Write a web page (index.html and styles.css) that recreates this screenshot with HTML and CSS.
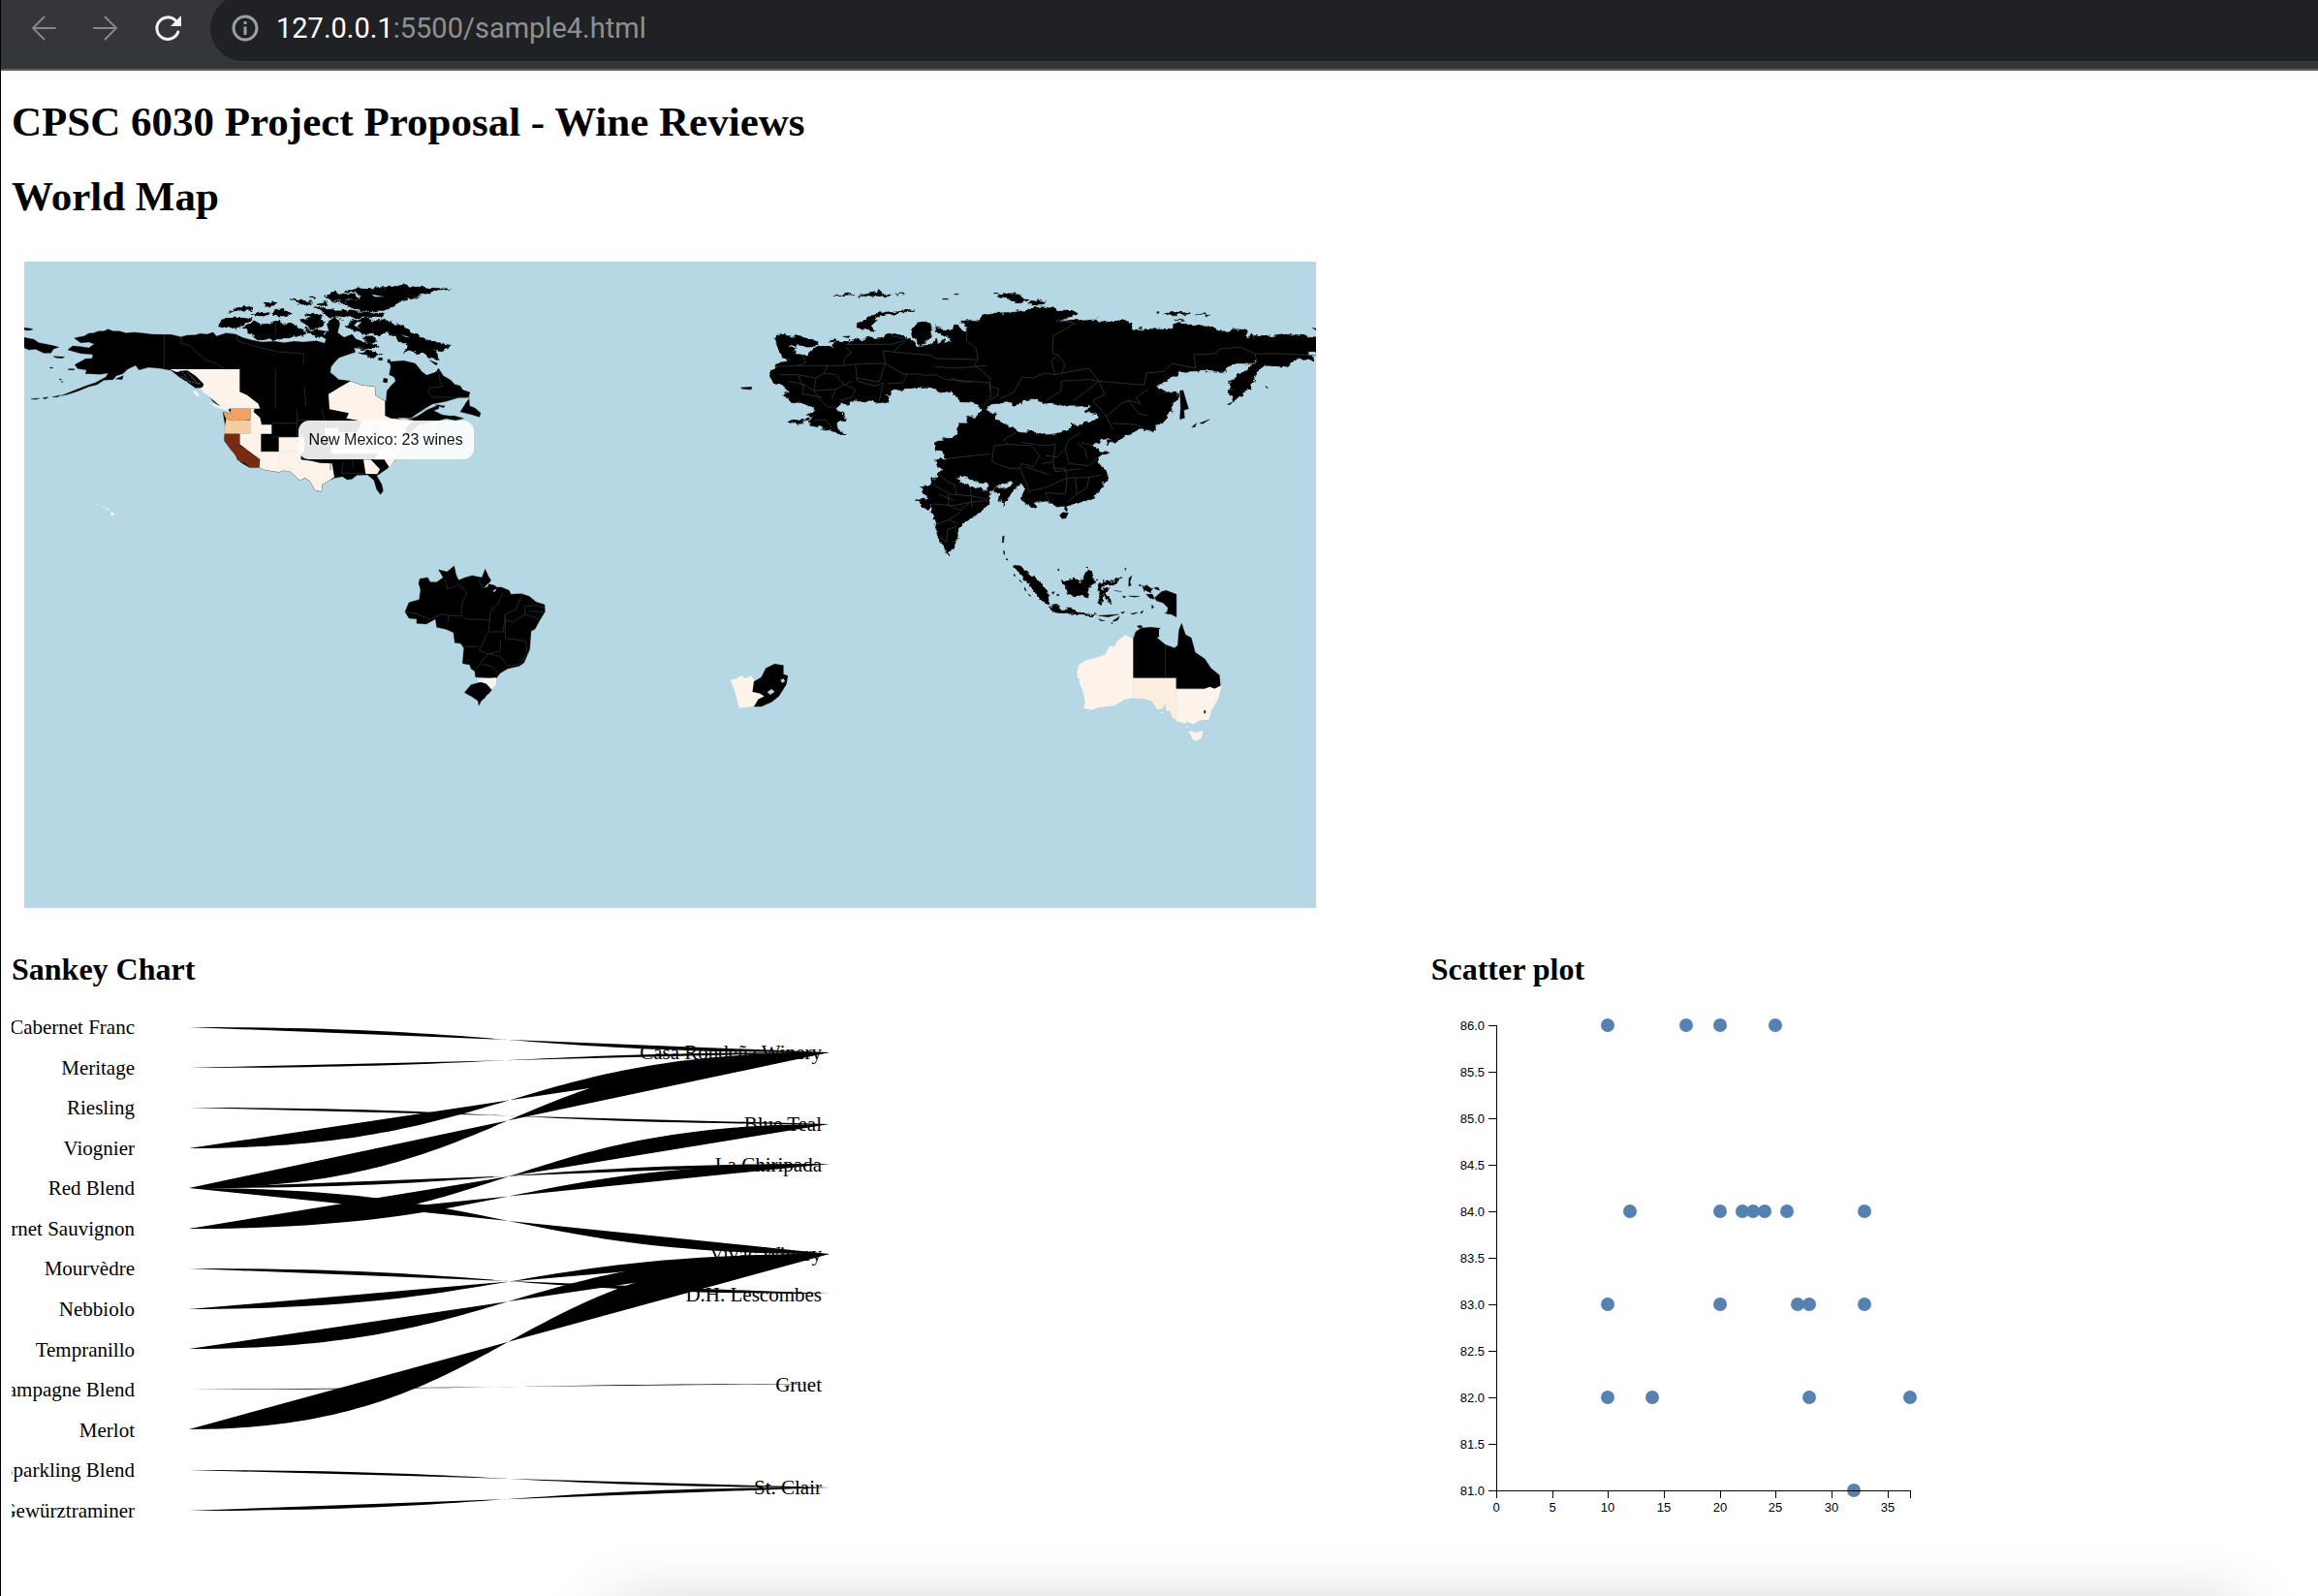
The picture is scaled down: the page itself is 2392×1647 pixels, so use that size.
FILE: index.html
```html
<!DOCTYPE html>
<html lang="en">
<head>
<meta charset="utf-8">
<title>CPSC 6030 Project Proposal - Wine Reviews</title>
<meta name="viewport" content="width=device-width, initial-scale=1">
<link rel="stylesheet" href="styles.css">
</head>
<body>
<div class="window">
  <header class="toolbar">
    <nav class="toolbar-nav" aria-label="Browser">
      <button class="nav-button dim" type="button" aria-label="Back">
        <svg viewBox="0 0 26 26"><path d="M25 13H2M13.500 1.500L2 13l11.500 11.500"/></svg>
      </button>
      <button class="nav-button dim" type="button" aria-label="Forward">
        <svg viewBox="0 0 26 26"><path d="M1 13h23M12.500 1.500L24 13 12.500 24.500"/></svg>
      </button>
      <button class="nav-button" type="button" aria-label="Reload">
        <svg viewBox="0 0 26 26"><path d="M23.800 17A11.300 11.300 0 1 1 21 5" stroke-width="3"/><path d="M27 0v11H16z" fill="currentColor" stroke="none"/></svg>
      </button>
    </nav>
    <div class="omnibox">
      <svg class="info" viewBox="0 0 28 28"><circle cx="14" cy="14" r="12"/><path d="M14 12.500V21M14 7v3"/></svg>
      <span class="url"><span class="host">127.0.0.1</span>:5500/sample4.html</span>
    </div>
  </header>

  <main class="page">
    <h1>CPSC 6030 Project Proposal - Wine Reviews</h1>
    <h1>World Map</h1>

    <figure class="map">
      <svg class="map-svg" viewBox="0 0 1333 667" role="img" aria-label="World map of wines by region">
        <defs>
          <filter id="coast" x="-5%" y="-5%" width="110%" height="110%">
            <feTurbulence type="fractalNoise" baseFrequency=".05" numOctaves="3" seed="4"/>
            <feDisplacementMap in="SourceGraphic" scale="22" xChannelSelector="R" yChannelSelector="G"/>
          </filter>
        </defs>
        <rect class="sea" width="1333" height="667"/>

        <!-- North America -->
        <g transform="translate(-5 -5) scale(.33333)">
          <path class="land" d="M170 252L185 248 200 246 215 237 230 236 245 230 262 230 275 224 290 230 310 230 330 236 355 234 380 236 410 240 448 241 470 241 500 248 520 243 545 242 560 238 580 240 600 234 610 246 640 236 670 240 690 250 720 258 750 264 790 262 820 266 850 262 880 264 920 260 945 268 950 255 938 248 958 228 952 208 975 193 992 208 985 235 1005 250 1030 240 1042 255 1062 262 1055 275 1035 280 1040 295 1010 305 990 312 980 322 965 340 962 358 975 368 988 380 1025 385 1060 398 1100 402 1103 430 1120 440 1135 448 1138 415 1150 400 1165 385 1160 372 1145 365 1150 340 1145 325 1190 322 1225 330 1242 350 1260 365 1285 358 1298 346 1312 368 1335 382 1348 395 1365 400 1372 412 1395 420 1390 435 1360 436 1320 448 1280 455 1258 468 1225 490 1205 505 1235 492 1262 474 1300 458 1298 470 1282 476 1310 490 1345 494 1300 506 1260 515 1235 520 1205 550 1165 628 1140 655 1115 672 1106 678 1122 705 1126 725 1118 736 1106 720 1098 692 1078 675 1045 676 1030 688 1015 690 1000 680 975 685 960 692 938 704 935 727 915 722 900 695 885 684 868 692 850 675 835 663 813 662 805 667 760 660 742 652 712 652 685 636 655 595 635 570 637 520 630 480 650 486 650 470 620 462 595 445 570 405 545 406 520 388 495 372 470 352 440 346 400 342 370 350 360 336 335 348 320 362 300 368 290 380 262 382 240 396 215 402 180 416 150 426 130 430 175 412 210 398 235 390 268 372 275 360 250 364 222 362 205 362 208 350 180 346 172 334 190 324 205 316 225 315 228 302 190 299 150 288 165 276 190 278 215 282 232 270 215 264 190 266Z"/>
          <path class="land" d="M15 220L35 222 42 225 28 228 15 226ZM15 250L45 256 60 266 80 270 100 274 122 280 105 286 98 298 75 298 50 286 30 288 15 282ZM105 308L140 310 132 314 112 312ZM95 343h8v2h-8ZM124 379h6v2h-6ZM130 386h4v2h-4ZM152 347h18v3h-18ZM298 378L322 368 318 380ZM36 440L62 438 50 442ZM72 437L90 434 80 440ZM102 434L128 428 118 434Z"/>
          <!-- Arctic archipelago -->
          <g filter="url(#coast)">
            <path class="land" d="M618 212L632 188 665 188 690 186 725 192 700 208 680 218 650 222ZM652 168L675 160 690 154 722 156 720 166 695 166 668 172ZM716 178L745 170 780 174 765 184 735 182ZM690 218L725 204 750 206 795 202 805 190 818 206 850 208 860 218 888 232 880 248 845 246 812 256 780 254 745 258 728 252 720 238ZM756 142L798 140 785 154 758 154ZM785 172L806 160 845 174 825 184 785 182ZM843 132L872 132 908 142 880 150ZM900 124L915 122 918 130 905 131ZM868 194L895 190 925 188 948 206 928 220 902 222 880 210ZM882 222L935 228 955 242 912 246ZM882 180L915 174 940 184 912 192ZM910 152L960 164 1000 164 1040 170 1080 170 1134 176 1128 188 1060 188 1010 190 958 184 940 170ZM920 144L945 140 960 152 935 152Z"/>
            <path class="land" d="M943 124L975 110 1005 114 1040 118 1050 128 1000 136 970 134 955 130ZM1000 108L1045 99 1090 96 1160 92 1220 92 1335 100 1290 108 1240 118 1210 130 1170 142 1145 158 1135 166 1095 168 1060 166 1025 160 1015 144 985 144 975 138 1030 134 1060 126 1040 112Z"/>
            <path class="land" d="M1014 218L1022 202 1050 192 1080 192 1105 200 1135 196 1160 206 1190 218 1215 232 1240 246 1262 260 1290 264 1332 274 1318 292 1285 288 1300 320 1272 314 1250 302 1215 292 1188 294 1206 276 1175 264 1160 242 1138 234 1110 246 1090 238 1065 240 1035 234ZM1030 282L1055 266 1085 262 1114 278 1085 286ZM1052 300L1080 290 1122 302 1095 308ZM1065 248L1095 248 1105 262 1080 264ZM955 200L975 188 998 200 975 208Z"/>
          </g>
          <path class="water" d="M1060 202L1046 215 1058 224 1036 212 1046 202ZM1090 116L1130 124 1100 124ZM1240 335L1265 340 1290 338 1292 355 1262 366 1245 355ZM810 258L850 250 840 258ZM1180 240L1210 250 1196 248Z"/>
          <path class="land" d="M1365 480L1378 460 1385 448 1392 440 1394 462 1410 468 1428 484 1424 496 1405 490 1390 486ZM1320 500L1345 492 1375 500 1350 506ZM1288 458L1318 462 1312 467ZM1112 313h12v7h-12ZM1140 318h8v10h-8ZM1128 376L1140 378 1138 390 1126 388ZM1270 320L1295 330 1290 336Z"/>
          <path class="cream" d="M465 348H682V418L705 428 740 455 745 470H650L640 476 605 464 590 452 622 462 590 436 570 420 560 405 570 398 545 368 520 354 495 356 485 356ZM536 414L550 416 558 434 545 428Z"/>
          <path class="land" d="M495 354L520 352 548 372 570 394 566 404 545 402 520 386 502 372Z"/>
          <path class="frost" d="M503 356L518 372M520 358L548 386M502 370L530 386M530 370L560 400M515 385L560 392"/>
          <path class="cream" d="M715 471H728L725 480 745 498 750 520 781 520V548H748V604H803V558H882V603L872 608V628L905 632 930 638 968 640 975 682 960 692 938 704 935 727 915 722 900 695 885 684 868 692 850 675 835 663 813 662 805 667 760 660 742 652 745 628 682 580V548H715Z"/>
          <path class="cream" d="M1025 385L1060 398 1100 402 1103 430 1120 440 1132 447V492L1150 500 1222 506 1195 530 1200 560 1165 628 1145 652 1130 628H1098L1110 610H965L963 560 945 555V530H985L990 543H1045L1060 512 1050 507 1012 500 1020 484 960 472 957 425 990 405ZM1065 628H1088L1116 658 1108 673 1072 672Z"/>
          <path class="water" d="M1170 498L1215 500 1190 506ZM575 420L600 448 585 440ZM640 470L656 484 648 486Z"/>
          <path class="wa" d="M630 480L652 487 655 471H715V505H690L665 508 640 503Z"/>
          <path class="or" d="M640 503L665 508 690 505 720 506 715 520V548H634L637 520Z"/>
          <path class="ca" d="M635 548H682V582L745 628 742 652H712L700 640 675 630 668 612 652 595 635 570Z"/>
          <path class="cream" d="M239 768L246 769 243 772ZM258 774h5v3h-5ZM268 779h10v4h-10ZM283 790L293 794 290 803 282 798Z"/>
          <path class="border" d="M448 241V345M500 248V268L530 276 550 298 580 320 610 332 638 348M672 240L675 260 740 280 800 294 880 300V330M793 205V238M793 348V470M882 402L887 460M860 471V558M860 506H950L948 530M935 470L945 505M781 515H860M781 558H860M963 640V660M1002 632L998 670M1032 628V656M998 670H1068M1298 348L1300 375 1310 400 1290 405 1270 405 1265 420 1280 435H1395"/>
          <path class="border-light" d="M715 505V548H748M682 548H715M748 604H872M803 604V662M812 658H870"/>
        </g>

        <!-- Brazil -->
        <g transform="translate(355 290) scale(.33333)">
          <path class="land" d="M114 214L126 185 158 176 162 146 156 125 160 112 184 108 192 122 212 122 232 108 218 84 244 90 266 72 272 100 280 116 300 108 322 102 340 106 352 108 362 82 372 104 380 116 372 128 390 132 398 138 412 138 436 148 442 160 474 158 498 166 520 184 546 192 547 214 530 242 516 268 504 274 500 330 482 372 468 382 432 390 408 404 396 420 332 416 330 398 318 390 314 378 292 374 296 326 286 312 268 310 264 278 240 268 212 262 208 236 180 252 150 250 150 236 126 234Z"/>
          <path class="cream" d="M338 422L396 418V440L382 454 364 436 342 432Z"/>
          <path class="land" d="M298 464L318 440 348 432 366 438 382 456 368 474 350 490 342 504 340 490 320 476Z"/>
          <path class="water" d="M358 140L374 124 370 136ZM384 150L398 142 392 152ZM362 478L374 466 370 478Z"/>
          <path class="border" d="M118 214L150 220 192 238 230 220 248 226H290L300 236 376 240 378 214 402 188 418 154M248 226V246M238 112L246 144 280 130 306 156 290 190 288 222M340 112L356 142M376 240L372 276H418L424 222 458 206 476 160M424 240L448 246 486 222 484 198 512 194 546 200M424 222V296L488 304 492 340 470 376 430 382 410 352 370 344 344 334 370 278M410 304L408 336 370 344 332 392M300 322H344M352 376L384 384 402 404M486 222L518 232 530 240M500 212L544 214"/>
        </g>

        <!-- South Africa -->
        <g transform="translate(-25 -270) scale(1.5255)">
          <path class="cream" d="M494 460L498 459 502 457 504 459 508 457 511 461 511 468 517 471 513 476 508 478 500 479 498 471 496 465Z"/>
          <path class="south-land" d="M510 461L515 458 518 452 524 449 530 450 530 456 533 457 532 463 527 471 522 475 515 478 510 478 513 473 517 471 514 469 509 468Z"/>
          <path class="water" d="M519 468l3-2 2 2-3 2ZM528 460l2-1 1 2-2 1Z"/>
        </g>

        <!-- Russia, China and India -->
        <g transform="translate(715 0) scale(.40816 .33333)">
          <g filter="url(#coast)">
            <path class="land" fill-rule="evenodd" d="M142 236L148 229 175 225 205 232 230 238 252 246 256 256 245 265 215 264 188 258 178 264 200 268 196 280 215 282 228 290 242 272 262 262 288 264 300 250 282 244 300 238 300 248 320 250 345 240 370 240 380 234 400 240 422 236 430 226 450 226 480 235 495 250 512 262 530 262 545 250 555 240 558 256 572 240 590 250 594 236 570 230 552 215 550 195 562 206 590 212 600 192 622 205 634 212 638 200 612 190 615 184 645 180 665 182 668 168 700 160 750 156 790 150 798 142 830 140 865 150 905 150 912 160 890 175 845 188 900 180 920 182 960 180 990 190 1010 182 1045 185 1052 205 1080 212 1085 205 1145 208 1150 195 1200 192 1230 198 1265 212 1325 212 1340 218 1345 238 1350 226 1400 228 1430 224 1540 236V276L1490 280 1508 296 1506 306 1470 302 1430 328 1380 325 1362 345 1365 352 1356 360 1362 370 1350 378 1350 392 1330 402 1318 420 1305 432 1297 400 1295 375 1320 350 1345 328 1370 310 1370 304 1352 322 1330 315 1310 315 1285 330 1288 342 1240 338 1180 340 1140 365 1108 388 1130 395 1132 404 1160 402 1164 420 1152 450 1140 475 1112 512 1100 522 1072 520 1030 540 1010 552 985 568 990 548 972 552 950 570 968 584 990 585 965 610 965 620 985 655 988 675 965 712 935 742 912 746 885 756 860 760 840 745 805 745 802 762 785 755 770 730 775 705 770 688 748 708 735 735 724 752 718 735 710 742 714 712 695 710 700 704 730 700 750 688 735 678 712 700 688 708 690 735 688 755 668 765 662 778 640 795 610 825 607 870 595 895 585 908 575 895 560 850 548 810 542 755 530 768 515 760 520 748 502 738 535 732 520 715 515 695 540 685 560 655 570 640 555 635 553 615 580 610 568 590 556 585 550 560 560 550 590 545 610 535 612 500 630 500 632 482 660 475 675 458 660 448 640 435 620 435 600 410 580 402 555 402 540 390 525 385 480 395 440 400 436 412 428 418 437 432 410 437 380 432 350 430 325 440 308 440 305 458 318 470 322 490 305 505 308 518 320 535 312 540 290 524 262 516 240 508 225 496 190 502 178 493 198 488 225 495 240 480 228 475 245 465 245 450 215 440 185 430 168 412 182 405 165 388 158 376 135 370 133 335 150 325 142 320 165 308 185 305 160 290 155 268 150 252ZM678 456L692 466 706 474 706 492 735 505 755 525 800 528 830 536 862 532 890 520 895 502 920 505 968 484 962 470 932 466 940 446 915 448 870 448 840 438 805 428 775 425 770 445 740 435 700 440 690 450ZM610 672L625 663 650 680 685 688 685 706 650 698 618 684Z"/>
            <path class="land" d="M490 210L510 188 530 186 542 198 540 235 520 260 500 238ZM348 203L362 188 385 168 420 158 470 150 505 146 500 152 455 158 415 170 390 185 385 200 402 214 375 212ZM290 103L330 102 348 100 335 106 310 107ZM360 106L385 98 412 92 418 100 445 104 420 108 400 106 385 108ZM455 99L475 98 470 103ZM710 110L725 98 755 98 768 108 788 118 775 125 745 120ZM785 132L805 118 838 126 820 132ZM1125 160L1150 154 1195 160 1160 168 1140 166ZM1208 163L1248 166 1225 168ZM1155 180L1185 182 1170 186Z"/>
          </g>
          <path class="land" d="M1112 155h5v5h-5ZM1505 205L1514 207V212ZM1170 400L1178 398 1188 440 1192 455 1180 460 1182 484 1170 488 1172 450ZM60 390L88 388 86 396 64 394ZM318 232L336 230 332 236ZM1200 512L1212 500 1208 512ZM1220 500L1245 488 1228 502ZM1290 442L1304 434 1296 443ZM1387 385l6 6h-4ZM866 785L874 776 888 778 882 794 872 796ZM722 850l4 0-2 20h-3ZM724 895l2 0 1 12h-2ZM730 920h4l1 4h-3ZM880 756l6 10-2 8-6-8ZM570 115h14v2h-14ZM600 100h10v2h-10ZM700 97h10v2h-10Z"/>
          <path class="border" d="M150 325L205 322 320 322 340 318 425 315 470 348 512 348 525 352 555 350 575 365 640 370 688 375 690 400M205 322L225 312 215 290M320 322L322 300 340 280 325 265M325 256H440L470 245M425 315L420 275 445 280 480 240 440 230M445 280L540 290 555 300 660 303 655 270 630 245 632 215M480 348L470 375 430 378M550 325L600 330 680 322M660 303L650 320 690 360 692 420 670 450M590 360L620 372 645 372M692 385L712 395 708 415 690 430M860 180L905 190 850 230 848 285 862 288 880 320 870 345 855 350 828 345 800 360 770 358 750 405 715 425M862 288L845 310 855 350M870 345L940 330 965 370 940 365 870 370 870 400 830 430M965 370L935 400 900 430M965 370L1080 382 1085 345 1130 340 1150 315 1210 330 1205 288 1260 285 1270 270 1325 265 1360 285 1420 285 1514 290M1360 285L1365 315M965 370L980 410 950 430 985 480 1000 520M985 480L1020 440 1040 430 1070 440 1060 420 1090 395M1040 430L1065 470 1090 478M1000 500L1060 505 1075 515M205 350L250 360 270 345 300 350 320 380 350 395 340 420 310 430M220 380L245 400 300 395 340 370M180 370L220 380 215 410 265 420M250 360L245 400 265 435M160 350L205 350 215 385M265 435L280 450 300 450M245 490L275 490 290 515M350 320L355 370 400 385 420 375 410 430M270 345L280 320M300 395L290 425M350 360L410 372 425 315M580 610L690 595M700 570L695 620 740 640 765 640 770 625 800 635 815 600 795 570 735 565 700 570ZM735 565L725 550 755 530M770 560L830 570 855 565 850 620 820 625M830 600L860 605 880 580 890 550 920 530M880 580L890 625 940 632 960 610M850 640L880 640 885 670 830 700 790 710M765 640L780 680 790 715M885 670L940 668 970 660M885 670L880 720 830 715 840 745M905 670L910 720 885 745M940 668L935 700 910 720M850 620L855 650 920 642M910 560L930 580 935 610M920 560L950 570M780 635L840 660M545 690L590 720 640 725 685 735M560 655L580 680 600 690 605 720M545 750L600 755 640 745 685 740M585 720V755L615 770 640 745M548 815L585 800 610 810M585 800L615 775M560 850L580 870 582 830 605 820M640 700L645 760M600 740L560 720"/>
        </g>

        <!-- Indonesia and Australia -->
        <g transform="translate(895 130) scale(.33333)">
          <path class="land" filter="url(#coast)" d="M372 548L400 552 430 580 455 598 470 615 478 632 492 635 488 645 492 672 475 668 450 645 425 612 410 588 385 562ZM486 678L510 676 530 684 555 684 585 696 610 702 635 704 620 708 580 704 545 698 500 692ZM526 592L540 600 560 594 588 600 598 570 606 562 622 565 624 590 634 600 618 608 608 652 590 648 545 642 540 622 528 610ZM645 602L690 598 706 592 695 608 655 610 654 622 675 620 664 634 684 668 664 655 655 640 652 672 640 668 645 635 638 625ZM775 620L795 614 806 622 802 634 782 630Z"/>
          <path class="land" d="M640 706L668 704 704 702 670 710ZM640 716L660 722 648 722ZM685 722L706 708 700 720 688 724ZM815 650L835 632 850 628 882 640V710L862 700 852 698 856 682 840 666 820 660ZM714 645L726 647 720 651ZM734 645L768 646 752 649ZM735 590L744 582 738 602 742 612 734 615ZM788 640L808 640 814 655 800 652ZM806 672L812 680 806 684ZM770 696L780 690 774 700ZM846 698L860 694 862 702ZM396 594L404 604 398 600ZM412 618L418 630 412 626ZM378 576L384 582 380 584ZM424 638L432 646 426 644ZM710 696L722 694 716 700ZM740 700L762 696 750 702ZM765 610L775 612 768 615ZM690 628L712 632 700 630ZM496 633L505 632 500 640ZM512 640h6v4h-6ZM515 562h4v4h-4ZM722 560l4-2-2 8ZM680 728h5v2h-5ZM760 738L772 736 778 742 766 744ZM812 620L825 618 830 628 818 624Z"/>
          <path class="cream" d="M574 880L580 858 600 845 660 828 675 800 690 802 698 785 725 765 740 775 749 776V960L720 966 690 985 640 990 620 998 594 992 600 975 592 940 580 910 584 905 576 898Z"/>
          <path class="south-au" d="M749 898H882V1030L868 1020 862 1000 850 1002 848 978 838 995 822 996 805 970 775 962 749 962Z"/>
          <path class="land" d="M749 898V776L756 756 772 745 800 742 832 745 830 768 822 775 848 796 876 806 886 798 890 750 898 730 910 765 928 775 940 820 970 840 988 868 1015 890 1018 922 1000 932H882V898Z"/>
          <path class="cream" d="M882 932H970L985 926 1000 932 1021 924 1012 962 990 1000 982 1028 955 1030 935 1042 915 1034 908 1040 882 1032ZM920 1062L942 1068 964 1062 960 1085 942 1094 932 1088ZM912 1050h6v4h-6ZM832 1005L845 1004 838 1009Z"/>
          <path class="land" d="M968 1000h4v8h-4Z"/>
          <path class="water" d="M828 748L836 744 838 772 828 768Z"/>
          <path class="border" d="M749 776V898M848 796V898M749 898H882V932H970"/>
          <path class="border-light" d="M749 898V960M882 932V1030M882 988L905 995 930 1008 965 1010 982 1025"/>
        </g>
      </svg>
      <figcaption class="tooltip" role="tooltip">New Mexico: 23 wines</figcaption>
    </figure>

    <div class="charts">
      <section>
        <h2>Sankey Chart</h2>
        <svg class="sankey" viewBox="0 0 860 530" role="img" aria-label="Sankey chart of grape varieties and wineries">
          <g class="labels">
            <text x="127" y="21">Cabernet Franc</text>
            <text x="127" y="63">Meritage</text>
            <text x="127" y="104">Riesling</text>
            <text x="127" y="146">Viognier</text>
            <text x="127" y="187">Red Blend</text>
            <text x="127" y="229">Cabernet Sauvignon</text>
            <text x="127" y="270">Mourvèdre</text>
            <text x="127" y="312">Nebbiolo</text>
            <text x="127" y="354">Tempranillo</text>
            <text x="127" y="395">Champagne Blend</text>
            <text x="127" y="437">Merlot</text>
            <text x="127" y="478">Sparkling Blend</text>
            <text x="127" y="520">Gewürztraminer</text>
            <text x="836" y="47">Casa Rondeña Winery</text>
            <text x="836" y="121">Blue Teal</text>
            <text x="836" y="163">La Chiripada</text>
            <text x="836" y="255">Vivac Winery</text>
            <text x="836" y="297">D.H. Lescombes</text>
            <text x="836" y="390">Gruet</text>
            <text x="836" y="496">St. Clair</text>
          </g>
          <g class="links">
            <path d="M183 14C513 14 513 40 844 40"/>
            <path d="M183 56C513 56 513 40 844 40"/>
            <path d="M183 97C513 97 513 114 844 114"/>
            <path d="M183 139C513 139 513 40 844 40"/>
            <path d="M183 180C513 180 513 40 844 40"/>
            <path d="M183 180C513 180 513 155 844 155"/>
            <path d="M183 180C513 180 513 248 844 248"/>
            <path d="M183 222C513 222 513 114 844 114"/>
            <path d="M183 222C513 222 513 155 844 155"/>
            <path d="M183 263C513 263 513 289 844 289"/>
            <path d="M183 305C513 305 513 248 844 248"/>
            <path d="M183 346C513 346 513 248 844 248"/>
            <path d="M183 388C513 388 513 382 844 382"/>
            <path d="M183 429C513 429 513 248 844 248"/>
            <path d="M183 471C513 471 513 489 844 489"/>
            <path d="M183 513C513 513 513 489 844 489"/>
          </g>
        </svg>
      </section>

      <section>
        <h2>Scatter plot</h2>
        <svg class="scatter" viewBox="0 0 520 530" role="img" aria-label="Scatter plot of points against price">
          <g class="dots">
            <circle cx="182" cy="12" r="7"/><circle cx="263" cy="12" r="7"/><circle cx="298" cy="12" r="7"/><circle cx="355" cy="12" r="7"/>
            <circle cx="205" cy="204" r="7"/><circle cx="298" cy="204" r="7"/><circle cx="321" cy="204" r="7"/><circle cx="332" cy="204" r="7"/><circle cx="344" cy="204" r="7"/><circle cx="367" cy="204" r="7"/><circle cx="447" cy="204" r="7"/>
            <circle cx="182" cy="300" r="7"/><circle cx="298" cy="300" r="7"/><circle cx="378" cy="300" r="7"/><circle cx="390" cy="300" r="7"/><circle cx="447" cy="300" r="7"/>
            <circle cx="182" cy="396" r="7"/><circle cx="228" cy="396" r="7"/><circle cx="390" cy="396" r="7"/><circle cx="494" cy="396" r="7"/>
            <circle cx="436" cy="492" r="7"/>
          </g>
          <path class="axis" d="M59 12H67V492H59M59 60h8M59 108h8M59 156h8M59 204h8M59 252h8M59 300h8M59 348h8M59 396h8M59 444h8"/>
          <path class="axis" d="M67 500V492H494V500M125 492v8M182 492v8M240 492v8M298 492v8M355 492v8M413 492v8M471 492v8"/>
          <g class="ticks-y">
            <text x="55" y="17">86.0</text><text x="55" y="65">85.5</text><text x="55" y="113">85.0</text><text x="55" y="161">84.5</text><text x="55" y="209">84.0</text><text x="55" y="257">83.5</text><text x="55" y="305">83.0</text><text x="55" y="353">82.5</text><text x="55" y="401">82.0</text><text x="55" y="449">81.5</text><text x="55" y="497">81.0</text>
          </g>
          <g class="ticks-x">
            <text x="67" y="514">0</text><text x="125" y="514">5</text><text x="182" y="514">10</text><text x="240" y="514">15</text><text x="298" y="514">20</text><text x="355" y="514">25</text><text x="413" y="514">30</text><text x="471" y="514">35</text>
          </g>
        </svg>
      </section>
    </div>
  </main>
  <div class="window-shadow" aria-hidden="true"></div>
</div>
</body>
</html>
```
FILE: styles.css
```css
* { box-sizing: border-box; }

body {
  margin: 0;
  background: #fff;
  color: #000;
  font-family: "Liberation Serif", "Times New Roman", serif;
}

.window {
  position: relative;
  min-height: 100vh;
  border-left: 1px solid #000;
  overflow: hidden;
}

/* Browser toolbar */
.toolbar {
  display: flex;
  align-items: flex-start;
  height: 73px;
  padding-left: 31px;
  background: #35363a;
  border-bottom: 2px solid #5f6064;
  overflow: hidden;
}

.toolbar-nav {
  display: flex;
  align-items: center;
  gap: 38px;
  height: 57px;
  margin-right: 31px;
}

.nav-button {
  width: 26px;
  height: 26px;
  padding: 0;
  border: 0;
  background: none;
  color: #f1f3f4;
}

.nav-button.dim { color: #86878a; }

.nav-button svg {
  display: block;
  width: 26px;
  height: 26px;
  overflow: visible;
  fill: none;
  stroke: currentColor;
  stroke-width: 2;
  stroke-linecap: round;
}

.omnibox {
  display: flex;
  flex: 1;
  align-items: center;
  gap: 18px;
  height: 68px;
  margin-top: -5px;
  padding-left: 22px;
  border-radius: 34px 0 0 34px;
  background: #202124;
}

.info {
  width: 28px;
  height: 28px;
  fill: none;
  stroke: #9aa0a6;
  stroke-width: 3;
}

.url {
  color: #8e9093;
  font: 29px/34px Roboto, sans-serif;
}

.host { color: #fff; }

/* Page */
.page { padding: 0 14px 0 11px; }

h1 {
  margin: 28px 0;
  font-size: 43px;
  line-height: 49px;
}

h2 {
  margin: 26px 0 27px;
  font-size: 32px;
  line-height: 38px;
}

.map {
  position: relative;
  max-width: 1333px;
  margin: 43px 13px 18px;
}

.map-svg {
  display: block;
  width: 100%;
}

.sea, .water { fill: #b5d8e4; }

.land {
  fill: #000;
  stroke: #000;
  stroke-width: 1;
}

.south-land { fill: #000; }
.cream { fill: #fdf3ea; }
.south-au { fill: #fbeddf; }
.wa { fill: #efa263; }
.or { fill: #f5cda3; }
.ca { fill: #752c11; }

.border, .border-light, .frost {
  fill: none;
  stroke: #343d41;
  stroke-width: 2;
}

.border-light { stroke: #e9ece6; }
.frost { stroke: #8c9a9f; stroke-dasharray: 6 4; }

.tooltip {
  position: absolute;
  top: 24.6%;
  left: 21.2%;
  padding: 11px;
  border-radius: 11px;
  background: #fff;
  opacity: .9;
  font: 16px/18px "Liberation Sans", Arial, sans-serif;
  white-space: nowrap;
}

.charts {
  display: grid;
  grid-template-columns: 13fr 8fr;
}

.sankey, .scatter {
  display: block;
  width: 100%;
}

.sankey { max-width: 860px; }
.scatter { max-width: 520px; }

.labels {
  font-size: 21px;
  text-anchor: end;
}

.dots { fill: #5682b1; }

.axis {
  fill: none;
  stroke: #000;
  shape-rendering: crispEdges;
}

.ticks-x, .ticks-y {
  font: 13px "Liberation Sans", Arial, sans-serif;
  text-anchor: middle;
}

.ticks-y { text-anchor: end; }

/* Shadow cast by the window that lies below */
.window-shadow {
  position: absolute;
  right: 82px;
  bottom: -58px;
  left: 26.4%;
  height: 40px;
  box-shadow: 0 0 70px rgba(0, 0, 0, .28);
  pointer-events: none;
}
```
